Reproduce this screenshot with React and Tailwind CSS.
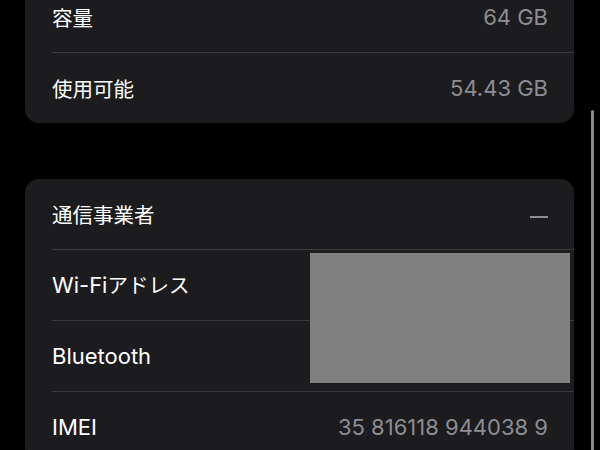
export default function App() {
  const font = { fontFamily: 'Inter, "Noto Sans CJK JP", sans-serif' };
  const Row = ({ children, value, sep = true, dash = false, cjk = false }) => (
    <div className="flex flex-col">
      <div className="flex h-[70px] items-center justify-between pl-[27px] pr-[26px]">
        <span className={cjk ? "pt-[4px] text-white" : "text-white"}>{children}</span>
        {dash ? (
          <span className="mt-[5px] h-[2px] w-[18px] bg-[#8d8d92]" />
        ) : (
          <span className="text-[22px] text-[#8d8d92]">{value}</span>
        )}
      </div>
      {sep && <div className="ml-[27px] h-px bg-[#3a3a3c]" />}
    </div>
  );
  const J = ({ t }) => <span className="text-[20.5px]">{t}</span>;
  const L = ({ t }) => <span className="text-[22px]">{t}</span>;
  return (
    <div className="relative h-[450px] w-[600px] overflow-hidden bg-black" style={font}>
      <div className="-mt-[18px] flex flex-col gap-[56px] pl-[25px] pr-[26px]">
        <div className="flex flex-col rounded-[14px] bg-[#1c1c1e]">
          <Row value="64 GB" cjk><J t="容量" /></Row>
          <Row value="54.43 GB" sep={false} cjk><J t="使用可能" /></Row>
        </div>
        <div className="relative flex flex-col rounded-[14px] bg-[#1c1c1e]">
          <Row dash cjk><J t="通信事業者" /></Row>
          <Row value=""><L t="Wi-Fi" /><J t="アドレス" /></Row>
          <Row value=""><L t="Bluetooth" /></Row>
          <Row value="35 816118 944038 9" sep={false}><L t="IMEI" /></Row>
          <div className="absolute left-[285px] top-[74px] h-[130px] w-[260px] bg-[#808080]" />
        </div>
      </div>
      <div className="absolute right-[6px] top-[110px] h-[360px] w-[3px] rounded-full bg-[#8a8a8a]" />
    </div>
  );
}
